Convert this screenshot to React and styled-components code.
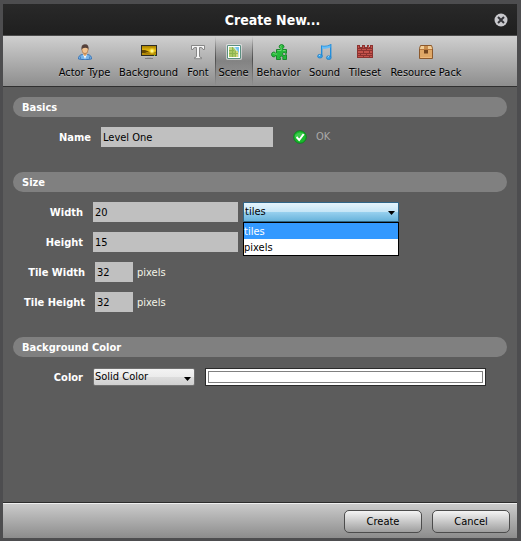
import React, { useState } from 'react';
import styled, { createGlobalStyle } from 'styled-components';

const GlobalStyle = createGlobalStyle`
  *, *::before, *::after { box-sizing: border-box; }
  body {
    margin: 0;
    background: #4b4b4b;
    font-family: Tahoma, "DejaVu Sans Condensed", "Noto Sans", sans-serif;
    font-size: 11px;
    line-height: 14px;
  }
  button, input, select { font: inherit; margin: 0; }
`;

const Dialog = styled.main`
  display: flex;
  flex-direction: column;
  min-height: 100vh;
  border: solid #4d4d4f;
  border-width: 4px 4px 3px 3px;
  background: #5c5c5c;
`;

const TitleBar = styled.header`
  display: grid;
  grid-template-columns: 48px 1fr 23px;
  align-items: center;
  height: 32px;
  border-bottom: 1px solid #4c4c4c;
  background: linear-gradient(#292929, #1f1f1f);
`;

const Title = styled.h1`
  grid-column: 2;
  margin: 0;
  color: #fff;
  font-size: 14px;
  line-height: 20px;
  font-weight: bold;
  text-align: center;
`;

const CloseButton = styled.button`
  width: 14px;
  height: 14px;
  padding: 0;
  border: 0;
  background: none;
  svg { display: block; }
`;

const Toolbar = styled.nav`
  display: flex;
  justify-content: center;
  height: 51px;
  border-bottom: 1px solid #303030;
  background: linear-gradient(#cfcfcf, #8e8e8e);
`;

const ToolButton = styled.button`
  display: flex;
  flex-direction: column;
  align-items: center;
  gap: 6px;
  width: ${(p) => p.$width}px;
  padding: 8px 0 0;
  border: 0;
  color: #000;
  white-space: nowrap;
  text-shadow: 0 1px 0 rgba(255, 255, 255, 0.35);
  background: ${(p) => (p.$active
    ? `linear-gradient(rgba(60,60,60,0), rgba(60,60,60,.75) 45%, rgba(60,60,60,0)) left / 1px 100% no-repeat,
       linear-gradient(rgba(60,60,60,0), rgba(60,60,60,.75) 45%, rgba(60,60,60,0)) right / 1px 100% no-repeat,
       linear-gradient(rgba(70,70,70,0) 5%, rgba(70,70,70,.42) 50%, rgba(70,70,70,0) 95%)`
    : 'none')};
  svg { display: block; flex: none; }
`;

const Content = styled.form`
  display: flex;
  flex: 1;
  flex-direction: column;
  gap: 25px;
  padding: 10px;
`;

const Section = styled.section`
  display: flex;
  flex-direction: column;
  gap: 10px;
`;

const SectionTitle = styled.h2`
  margin: 0;
  padding: 4px 9px 2px;
  border-radius: 10px;
  background: #808080;
  color: #fff;
  font-size: 11px;
  line-height: 14px;
  font-weight: bold;
`;

const Row = styled.div`
  display: flex;
  align-items: center;
  height: 20px;
`;

const Label = styled.label`
  flex: none;
  width: ${(p) => p.$width}px;
  margin-right: 10px;
  padding-top: 2px;
  color: #fff;
  font-weight: bold;
  text-align: right;
  white-space: nowrap;
`;

const TextInput = styled.input`
  width: ${(p) => p.$width}px;
  height: 20px;
  padding: 0 2px;
  border: 0;
  border-radius: 0;
  background: #c0c0c0;
  color: #000;
`;

const Unit = styled.span`
  margin-left: 4px;
  padding-top: 2px;
  color: #f4f4e8;
`;

const Status = styled.output`
  display: flex;
  align-items: center;
  gap: 9px;
  margin-left: 20px;
  color: #a9a9a9;
`;

const SelectBox = styled.div`
  position: relative;
  flex: none;
  width: ${(p) => p.$width}px;
  margin-left: ${(p) => p.$gap || 0}px;
`;

const Select = styled.select`
  display: block;
  width: 100%;
  height: ${(p) => (p.$open ? 20 : 18)}px;
  padding: 0 20px 0 1px;
  appearance: none;
  border: 1px solid ${(p) => (p.$open ? '#2f6588' : '#707070')};
  border-radius: ${(p) => (p.$open ? 1 : 2)}px;
  color: #000;
  background: ${(p) => (p.$open
    ? 'linear-gradient(#e5f4fc, #c4e5f6 50%, #98d1ef 50%, #68b3db)'
    : 'linear-gradient(#f3f3f3, #ebebeb 50%, #dddddd 50%, #cfcfcf)')};
`;

const Arrow = styled.svg`
  position: absolute;
  top: 9px;
  right: 4px;
  pointer-events: none;
`;

const OptionList = styled.ul`
  position: absolute;
  z-index: 1;
  top: 100%;
  left: 0;
  right: 0;
  margin: 0;
  padding: 0;
  border: 1px solid #000;
  background: #fff;
  list-style: none;
`;

const Option = styled.li`
  height: 16px;
  line-height: 18px;
  color: ${(p) => (p.$selected ? '#fff' : '#000')};
  background: ${(p) => (p.$selected ? '#3399ff' : '#fff')};
`;

const Swatch = styled.button`
  flex: 1;
  height: 18px;
  margin: 0 21px 0 10px;
  padding: 2px;
  border: 1px solid #2b2b2b;
  background: #fff;
`;

const SwatchColor = styled.span`
  display: block;
  height: 12px;
  border: 1px solid #808080;
  background: #fff;
`;

const Footer = styled.footer`
  display: flex;
  justify-content: flex-end;
  align-items: flex-start;
  gap: 10px;
  height: 36px;
  padding: 7px 7px 0;
  border-top: 1px solid #2c2c2c;
  box-shadow: inset 0 1px 0 #eeeeee;
  background: linear-gradient(#cccccc, #8c8c8c);
`;

const ActionButton = styled.button`
  width: 78px;
  height: 23px;
  padding: 0;
  border: 1px solid #4c4c4c;
  border-radius: 5px;
  color: #000;
  background: linear-gradient(#f4f4f4, #9e9e9e);
`;

const Icon = ({ children }) => (
  <svg width="16" height="16" viewBox="0 0 16 16" aria-hidden="true">{children}</svg>
);

const ActorIcon = () => (
  <Icon>
    <path d="M1.5 15 Q1.3 11 5.6 10.5 L10.4 10.5 Q14.7 11 14.5 15 Q8 16.6 1.5 15Z" fill="#79b4e8" stroke="#3c75b5" />
    <path d="M5.8 10 L8 15 L10.2 10Z" fill="#f7fafd" />
    <path d="M3.5 12.5V15M12.5 12.5V15" stroke="#4b86c3" />
    <path d="M6.3 8h3.4v2.6L8 12.3 6.3 10.6z" fill="#d79b62" />
    <ellipse cx="8" cy="5.6" rx="3.1" ry="4" fill="#f1c390" stroke="#9d6a40" strokeWidth=".6" />
    <path d="M4.6 6 Q3.7 .3 7.8 .2 Q12.4 .1 11.4 6 L10.7 4.2 Q8 3.4 5.4 4.4z" fill="#54403a" />
  </Icon>
);

const BackgroundIcon = () => (
  <Icon>
    <defs>
      <linearGradient id="sky" x2="0" y2="1">
        <stop stopColor="#a98100" /><stop offset=".5" stopColor="#e9bd10" /><stop offset="1" stopColor="#b08505" />
      </linearGradient>
      <radialGradient id="sun">
        <stop stopColor="#fffdd0" /><stop offset=".35" stopColor="#fff060" /><stop offset="1" stopColor="#f4d020" stopOpacity="0" />
      </radialGradient>
    </defs>
    <path d="M6 12h4v2H6z" fill="#a8a8a8" />
    <path d="M4 14h8v1H4z" fill="#7e7e7e" />
    <path d="M0 1h16v11H0z" fill="#2c2b26" />
    <path d="M1 2h14v9H1z" fill="url(#sky)" />
    <path d="M1 6h3l4 1.5L4 9H1z" fill="#664900" />
    <path d="M1 9h4l4-1.5L15 8v1L6 10z" fill="#8b6800" opacity=".6" />
    <circle cx="11" cy="7" r="3.4" fill="url(#sun)" />
    <path d="M0 12h16v1H0z" fill="#bdbdbd" /><path d="M13 11h1v1h-1z" fill="#61dc42" />
  </Icon>
);

const FontIcon = () => (
  <Icon>
    <path d="M1.5 1.5h13v4H13Q12.7 3.5 11 3.5H9.5v9q0 1 2 1v1.2H4.5v-1.2q2 0 2-1v-9H5Q3.3 3.5 3 5.5H1.5z" fill="#f6f6f6" stroke="#7d7d7d" strokeWidth=".9" />
  </Icon>
);

const SceneIcon = () => (
  <Icon>
    <path d="M.5.5h15v15H.5z" fill="#fff" />
    <path d="M1.5 1.5h13v13h-13z" fill="#fff" stroke="#5a8f80" strokeWidth="1" />
    <path d="M3 3h10v10H3z" fill="#a9c964" />
    <path d="M8 3h5v7z" fill="#74c2f0" />
    <path d="M7 3h2l4 6v4h-1V9z" fill="#c6e6e4" />
    <path d="M9 7h3v6H9z" fill="#d3d67c" />
    <path d="M3 6h5v1H3zM3 9h9v1H3zM6 3h1v10H6zM9 7h1v6H9z" fill="#83ab48" opacity=".75" />
    <path d="M3 3h3v3H3z" fill="#c8dc8c" opacity=".7" />
  </Icon>
);

const BehaviorIcon = () => (
  <Icon>
    <path d="M5.5 5.5h3.8V4.4Q7.8 3.4 8.2 2 9 .6 10.7.6 12.6.8 13 2.2 13 3.7 11.8 4.4v1.1h3.7v3.8h-1.2Q13.7 8.3 12.5 8.5 11.6 9 11.6 10 11.7 11.3 12.8 11.6 13.8 11.6 14.3 10.8h1.2v4.7h-3.7v-1.3Q12.4 13 11.2 12.2 10 11.8 9.2 12.7 8.7 13.6 9.5 14.2v1.3h-4v-3.6H4.4Q3.7 13.2 2 12.8.5 12.2.5 10.3.8 8.5 2.4 8.1 3.7 8 4.4 9h1.1z" fill="#25b93a" stroke="#128124" strokeWidth=".9" />
    <path d="M6.3 6.5h3.8V3.8L9.2 2.5l1.5-1M12 6.5h2.5M1.6 9.8q1.2-1.2 2.2.2h2.4" fill="none" stroke="#72df73" strokeWidth=".9" />
  </Icon>
);

const SoundIcon = () => (
  <Icon>
    <path d="M4.7 12V2.1Q9.5 3.2 13.7.8v12.5" fill="none" stroke="#238edb" strokeWidth="1.4" />
    <path d="M5 2.2Q9.4 3.3 13.4 1.2v2.4Q9.4 5.4 5 4.4z" fill="#64bdf8" />
    <ellipse cx="3" cy="12.2" rx="2.4" ry="1.9" fill="#359fe8" stroke="#1976bd" strokeWidth=".6" />
    <ellipse cx="11.8" cy="13.7" rx="2.4" ry="1.9" fill="#359fe8" stroke="#1976bd" strokeWidth=".6" />
    <path d="M1.8 11.8l1.5-.8M10.6 13.2l1.5-.8" stroke="#a8dfff" />
  </Icon>
);

const TilesetIcon = () => (
  <Icon>
    <path d="M0 1h3v2h2V1h3v2h2V1h2v2h1V1h3v13H0z" fill="#8c3330" />
    <path d="M1 2h1v2H1zM6 2h1v2H6zM11 2h1v2h-1zM14 2h1v2h-1zM1 5h3v1H1zM5 5h4v1H5zM10 5h5v1h-5zM1 7h5v2H1zM7 7h5v2H7zM13 7h2v2h-2zM1 10h2v1H1zM4 10h5v1H4zM10 10h5v1h-5zM1 12h5v1H1zM7 12h5v1H7zM13 12h2v1h-2z" fill="#c5524b" />
  </Icon>
);

const PackageIcon = () => (
  <Icon>
    <path d="M2.5 1.5h11l1 3v10h-13v-10z" fill="#dfa766" stroke="#8c592c" />
    <path d="M3 2h10l1 3H2z" fill="#f2cd97" />
    <path d="M6 2h4v4H6z" fill="#c88d4d" />
    <path d="M6 6h4v4l-1-1-1 1-1-1-1 1z" fill="#74461f" />
    <path d="M2 5.5h12" stroke="#ba7a3e" /><path d="M2.5 13.5h11" stroke="#eeb879" />
  </Icon>
);

const tools = [
  { name: 'Actor Type', Glyph: ActorIcon, width: 62 },
  { name: 'Background', Glyph: BackgroundIcon, width: 66 },
  { name: 'Font', Glyph: FontIcon, width: 33 },
  { name: 'Scene', Glyph: SceneIcon, width: 38 },
  { name: 'Behavior', Glyph: BehaviorIcon, width: 52 },
  { name: 'Sound', Glyph: SoundIcon, width: 40 },
  { name: 'Tileset', Glyph: TilesetIcon, width: 41 },
  { name: 'Resource Pack', Glyph: PackageIcon, width: 81 },
];

const DownArrow = () => (
  <Arrow width="7" height="4" viewBox="0 0 7 4" aria-hidden="true">
    <path d="M0 0h7L3.5 4z" fill="#000" />
  </Arrow>
);

export default function App() {
  const [active, setActive] = useState('Scene');
  const [unit, setUnit] = useState('tiles');
  return (
    <>
      <GlobalStyle />
      <Dialog>
        <TitleBar>
          <Title>Create New...</Title>
          <CloseButton type="button" aria-label="Close">
            <svg width="14" height="14" viewBox="0 0 14 14">
              <circle cx="7" cy="7" r="6.5" fill="#c9c9cd" />
              <path d="M4 4l6 6M10 4l-6 6" stroke="#35353a" strokeWidth="2" />
            </svg>
          </CloseButton>
        </TitleBar>
        <Toolbar>
          {tools.map(({ name, Glyph, width }) => (
            <ToolButton key={name} type="button" $width={width} $active={name === active} onClick={() => setActive(name)}>
              <Glyph />
              {name}
            </ToolButton>
          ))}
        </Toolbar>
        <Content id="scene-form" onSubmit={(e) => e.preventDefault()}>
          <Section>
            <SectionTitle>Basics</SectionTitle>
            <Row>
              <Label htmlFor="name" $width={78}>Name</Label>
              <TextInput id="name" $width={172} defaultValue="Level One" />
              <Status htmlFor="name">
                <svg width="14" height="14" viewBox="0 0 14 14" aria-hidden="true">
                  <circle cx="7" cy="7" r="6.3" fill="#19ba2c" stroke="#087e19" strokeWidth=".8" />
                  <path d="M2 5Q7 0 12 5 9 7 2 7z" fill="#55d462" opacity=".6" />
                  <path d="M3.5 7l2.7 3 4.5-6" fill="none" stroke="#fff" strokeWidth="2" />
                </svg>
                OK
              </Status>
            </Row>
          </Section>
          <Section>
            <SectionTitle>Size</SectionTitle>
            <Row>
              <Label htmlFor="width" $width={70}>Width</Label>
              <TextInput id="width" $width={145} defaultValue="20" />
              <SelectBox $width={156} $gap={5}>
                <Select $open aria-label="Size unit" value={unit} onChange={(e) => setUnit(e.target.value)}>
                  <option>tiles</option>
                  <option>pixels</option>
                </Select>
                <DownArrow />
                <OptionList role="listbox" aria-label="Size unit options">
                  {['tiles', 'pixels'].map((u) => (
                    <Option key={u} role="option" aria-selected={u === unit} $selected={u === unit} onClick={() => setUnit(u)}>{u}</Option>
                  ))}
                </OptionList>
              </SelectBox>
            </Row>
            <Row>
              <Label htmlFor="height" $width={70}>Height</Label>
              <TextInput id="height" $width={145} defaultValue="15" />
            </Row>
            <Row>
              <Label htmlFor="tile-width" $width={72}>Tile Width</Label>
              <TextInput id="tile-width" $width={38} defaultValue="32" />
              <Unit>pixels</Unit>
            </Row>
            <Row>
              <Label htmlFor="tile-height" $width={72}>Tile Height</Label>
              <TextInput id="tile-height" $width={38} defaultValue="32" />
              <Unit>pixels</Unit>
            </Row>
          </Section>
          <Section>
            <SectionTitle>Background Color</SectionTitle>
            <Row>
              <Label htmlFor="color" $width={70}>Color</Label>
              <SelectBox $width={102}>
                <Select id="color" defaultValue="Solid Color"><option>Solid Color</option></Select>
                <DownArrow />
              </SelectBox>
              <Swatch type="button" aria-label="Choose color"><SwatchColor /></Swatch>
            </Row>
          </Section>
        </Content>
        <Footer>
          <ActionButton type="submit" form="scene-form">Create</ActionButton>
          <ActionButton type="button">Cancel</ActionButton>
        </Footer>
      </Dialog>
    </>
  );
}
